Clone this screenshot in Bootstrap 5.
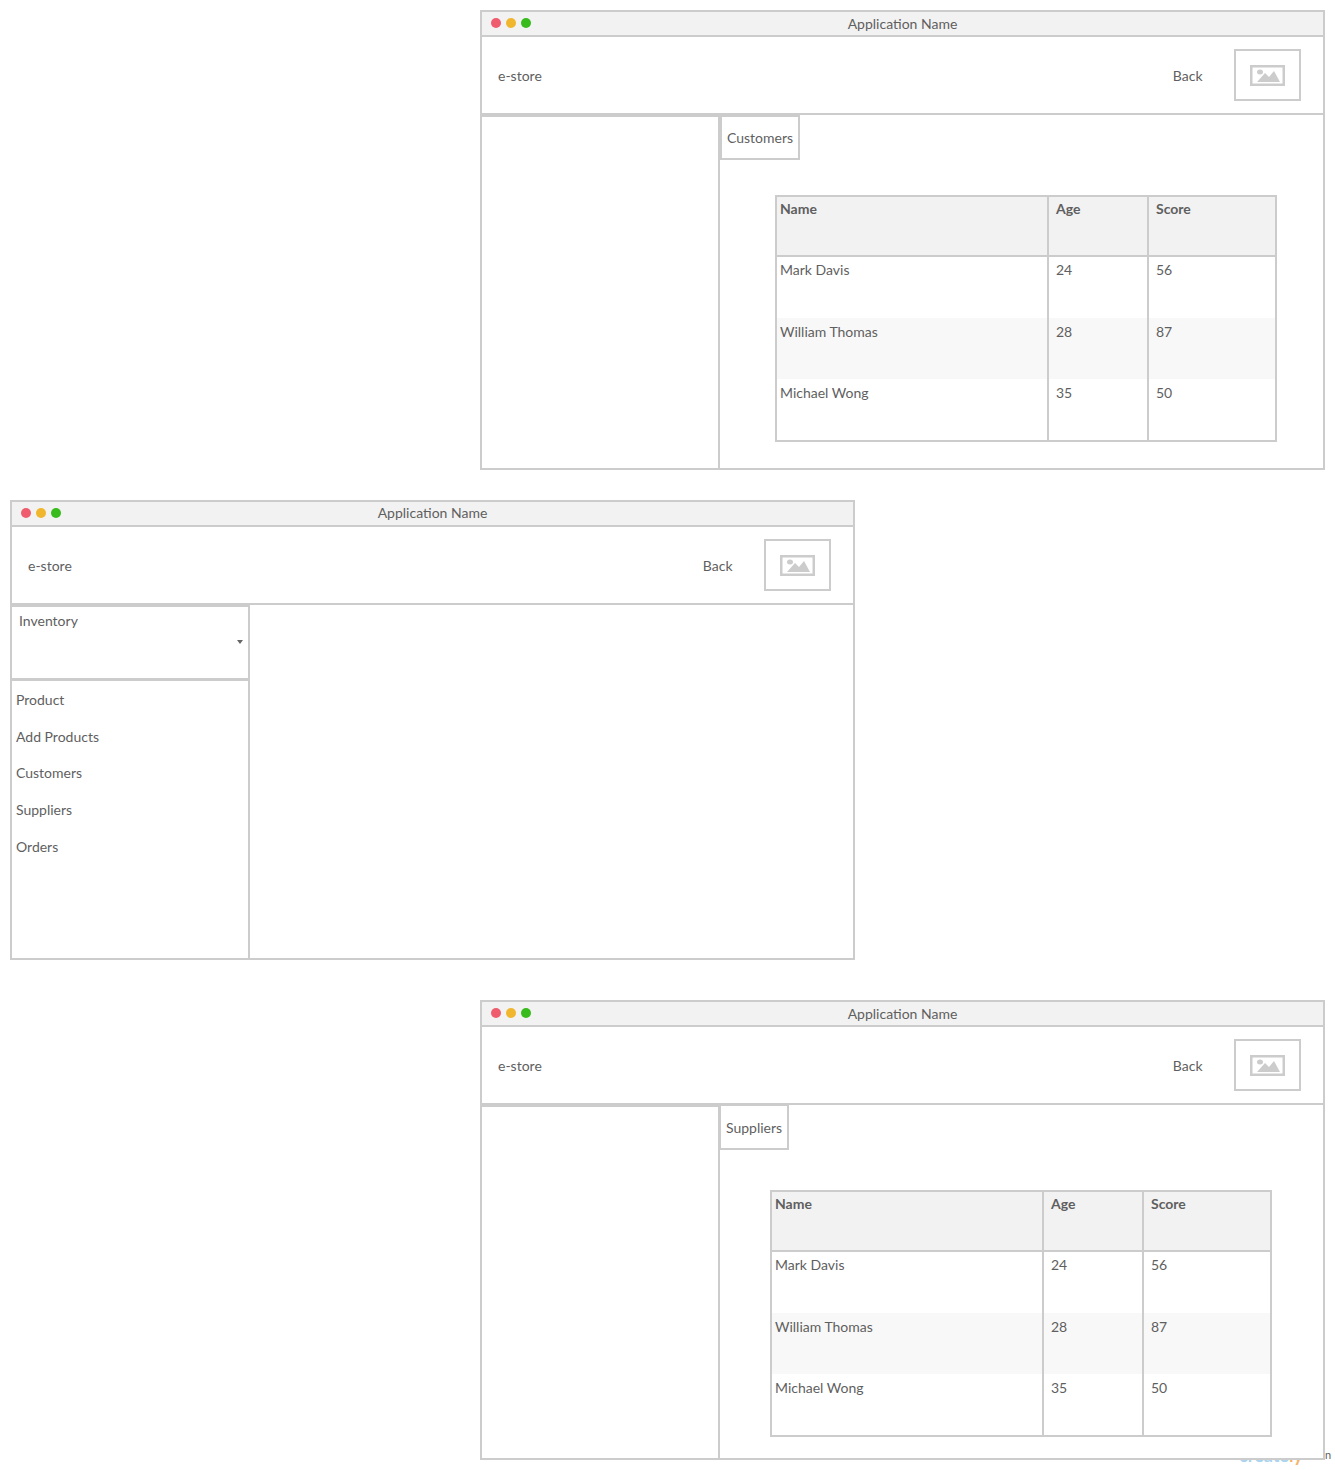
<!DOCTYPE html>
<html lang="en">
<head>
    <meta charset="UTF-8">
    <meta name="viewport" content="width=device-width, initial-scale=1">
    <title>e-store wireframes</title>
    <link href="https://cdn.jsdelivr.net/npm/bootstrap@5.3.0/dist/css/bootstrap.min.css" rel="stylesheet">
    <style>
        html, body { height: 1470px; overflow: hidden; }
        body {
            background: #fff;
            color: #5f5f5f;
            font: 14px/17px Lato, "Liberation Sans", sans-serif;
            position: relative;
        }
        .wire-page { padding-top: 10px; }
        .wire-win {
            position: relative;
            z-index: 1;
            width: 845px;
            height: 460px;
            border: 2px solid #ccc;
            background: #fff;
            display: flex;
            flex-direction: column;
        }
        .wire-right { margin-left: 480px; }
        .wire-left { margin-left: 10px; margin-top: 30px; margin-bottom: 40px; }
        .wire-title {
            height: 25px;
            background: #f2f2f2;
            border-bottom: 2px solid #ccc;
            flex: none;
            position: relative;
            text-align: center;
            padding-top: 3px;
        }
        .wire-left .wire-title { padding-top: 2px; }
        .wire-dots { position: absolute; left: 9px; top: 6px; gap: 5px; }
        .wire-dots i { display: block; width: 10px; height: 10px; border-radius: 50%; }
        .wire-head {
            height: 78px;
            flex: none;
            border-bottom: 2px solid #ccc;
            padding-left: 16px;
            padding-right: 22px;
        }
        .wire-back { margin-right: 31.5px; }
        .wire-logo {
            width: 67px;
            height: 52px;
            border: 2px solid #ccc;
        }
        .wire-side {
            width: 238px;
            flex: none;
            border-right: 2px solid #ccc;
            border-top: 2px solid #ccc;
        }
        .wire-main { flex: 1; min-width: 0; }
        .wire-tab {
            display: inline-block;
            height: 45px;
            border: 2px solid #ccc;
            padding: 12px 5px 0;
            background: #fff;
        }
        .wire-tab.wire-tab-up {
            height: 46px;
            margin-left: -1px;
            margin-top: -1px;
            padding-top: 13px;
        }
        .wire-select {
            height: 74px;
            border-bottom: 3px solid #ccc;
            padding: 5px 7px;
            position: relative;
        }
        .wire-caret {
            position: absolute;
            right: 5px;
            top: 33px;
            width: 0;
            height: 0;
            border-left: 3px solid transparent;
            border-right: 3px solid transparent;
            border-top: 4px solid #666;
        }
        .wire-menu { padding: 10px 4px 0; }
        .wire-menu div { height: 36.7px; }
        .wire-table-box {
            width: 502px;
            height: 247px;
            margin-left: 55px;
            margin-top: 35px;
            border: 2px solid #ccc;
        }
        .wire-table-box.wire-shift { margin-left: 50px; margin-top: 40px; }
        .wire-table {
            width: 498px;
            table-layout: fixed;
            border-collapse: collapse;
            color: #5f5f5f;
        }
        .wire-table th, .wire-table td {
            padding: 4px 3px 0;
            vertical-align: top;
            border-left: 2px solid #ccc;
            height: 61px;
        }
        .wire-table th:first-child, .wire-table td:first-child { border-left: 0; }
        .wire-table th:not(:first-child), .wire-table td:not(:first-child) { padding-left: 7px; }
        .wire-table th {
            height: 59px;
            padding-top: 3px;
            background: #f2f2f2;
            border-bottom: 2px solid #ccc;
            font-weight: 700;
        }
        .wire-table tr.wire-row-2 td { height: 62px; }
        .wire-table tr.wire-low td { padding-top: 5px; }
        .wire-table tr.wire-odd td { background: #f8f8f8; }
        .wire-mark { position: absolute; left: 1239px; top: 1444px; font-size: 18px; line-height: 22px; font-weight: 700; color: #a9d3ee; }
        .wire-mark b { color: #f5b36b; font-weight: 700; }
        .wire-mark-end { position: absolute; left: 1325px; top: 1449px; font-size: 11px; line-height: 12px; }
    </style>
</head>
<body>

<div class="wire-mark">create<b>ly</b></div>
<div class="wire-mark-end">n</div>

<div class="wire-page">

    <!-- Customers -->
    <div class="wire-win wire-right">
        <div class="wire-title">
            <div class="wire-dots d-flex">
                <i style="background:#ee5c6e"></i><i style="background:#f0b62e"></i><i style="background:#38bb1c"></i>
            </div>
            Application Name
        </div>
        <div class="wire-head d-flex align-items-center">
            <span class="me-auto">e-store</span>
            <span class="wire-back">Back</span>
            <div class="wire-logo d-flex align-items-center justify-content-center">
                <svg width="35" height="21" viewBox="0 0 35 21"><rect x="1.25" y="1.25" width="32.5" height="18.5" fill="none" stroke="#ccc" stroke-width="2.5"/><ellipse cx="10" cy="7" rx="3" ry="2.5" fill="#ccc"/><path d="M7 17l8-9 4 4 5-6 6 11z" fill="#ccc"/></svg>
            </div>
        </div>
        <div class="d-flex flex-grow-1">
            <div class="wire-side"></div>
            <div class="wire-main">
                <div class="wire-tab">Customers</div>
                <div class="wire-table-box">
                    <table class="wire-table">
                        <colgroup><col style="width:271px"><col style="width:100px"><col style="width:127px"></colgroup>
                        <tr><th>Name</th><th>Age</th><th>Score</th></tr>
                        <tr class="wire-row-2"><td>Mark Davis</td><td>24</td><td>56</td></tr>
                        <tr class="wire-odd wire-low"><td>William Thomas</td><td>28</td><td>87</td></tr>
                        <tr class="wire-low"><td>Michael Wong</td><td>35</td><td>50</td></tr>
                    </table>
                </div>
            </div>
        </div>
    </div>

    <!-- Inventory menu -->
    <div class="wire-win wire-left">
        <div class="wire-title">
            <div class="wire-dots d-flex">
                <i style="background:#ee5c6e"></i><i style="background:#f0b62e"></i><i style="background:#38bb1c"></i>
            </div>
            Application Name
        </div>
        <div class="wire-head d-flex align-items-center">
            <span class="me-auto">e-store</span>
            <span class="wire-back">Back</span>
            <div class="wire-logo d-flex align-items-center justify-content-center">
                <svg width="35" height="21" viewBox="0 0 35 21"><rect x="1.25" y="1.25" width="32.5" height="18.5" fill="none" stroke="#ccc" stroke-width="2.5"/><ellipse cx="10" cy="7" rx="3" ry="2.5" fill="#ccc"/><path d="M7 17l8-9 4 4 5-6 6 11z" fill="#ccc"/></svg>
            </div>
        </div>
        <div class="d-flex flex-grow-1">
            <div class="wire-side">
                <div class="wire-select">Inventory<span class="wire-caret"></span></div>
                <div class="wire-menu">
                    <div>Product</div>
                    <div>Add Products</div>
                    <div>Customers</div>
                    <div>Suppliers</div>
                    <div>Orders</div>
                </div>
            </div>
            <div class="wire-main"></div>
        </div>
    </div>

    <!-- Suppliers -->
    <div class="wire-win wire-right">
        <div class="wire-title">
            <div class="wire-dots d-flex">
                <i style="background:#ee5c6e"></i><i style="background:#f0b62e"></i><i style="background:#38bb1c"></i>
            </div>
            Application Name
        </div>
        <div class="wire-head d-flex align-items-center">
            <span class="me-auto">e-store</span>
            <span class="wire-back">Back</span>
            <div class="wire-logo d-flex align-items-center justify-content-center">
                <svg width="35" height="21" viewBox="0 0 35 21"><rect x="1.25" y="1.25" width="32.5" height="18.5" fill="none" stroke="#ccc" stroke-width="2.5"/><ellipse cx="10" cy="7" rx="3" ry="2.5" fill="#ccc"/><path d="M7 17l8-9 4 4 5-6 6 11z" fill="#ccc"/></svg>
            </div>
        </div>
        <div class="d-flex flex-grow-1">
            <div class="wire-side"></div>
            <div class="wire-main">
                <div class="wire-tab wire-tab-up">Suppliers</div>
                <div class="wire-table-box wire-shift">
                    <table class="wire-table">
                        <colgroup><col style="width:271px"><col style="width:100px"><col style="width:127px"></colgroup>
                        <tr><th>Name</th><th>Age</th><th>Score</th></tr>
                        <tr class="wire-row-2"><td>Mark Davis</td><td>24</td><td>56</td></tr>
                        <tr class="wire-odd wire-low"><td>William Thomas</td><td>28</td><td>87</td></tr>
                        <tr class="wire-low"><td>Michael Wong</td><td>35</td><td>50</td></tr>
                    </table>
                </div>
            </div>
        </div>
    </div>

</div>

<script src="https://cdn.jsdelivr.net/npm/bootstrap@5.3.0/dist/js/bootstrap.bundle.min.js"></script>
</body>
</html>
